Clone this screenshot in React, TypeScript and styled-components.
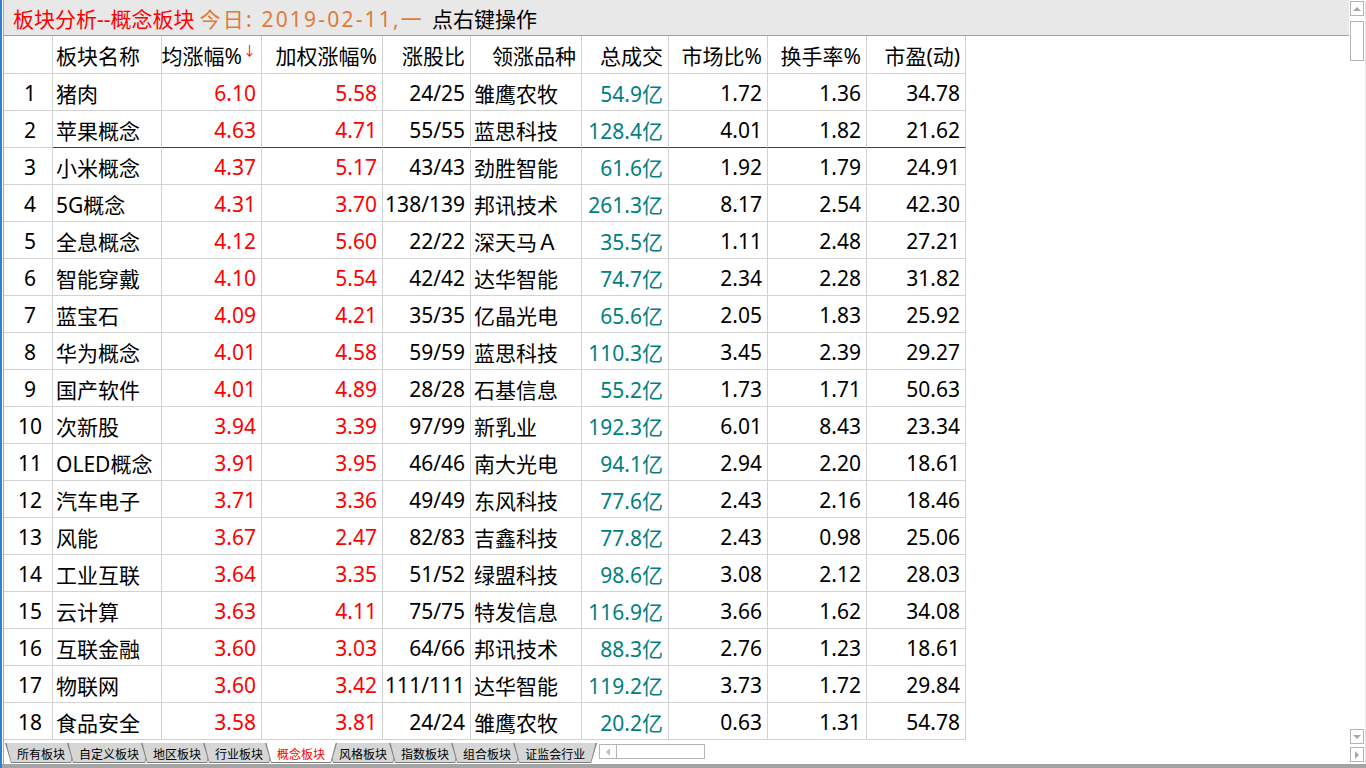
import React from 'react'
import styled, { createGlobalStyle, css } from 'styled-components'

const GlobalStyle = createGlobalStyle`
  html, body {
    margin: 0;
    padding: 0;
    background: #fff;
    overflow: hidden;
  }
  body {
    font-family: "Noto Sans", "Noto Sans CJK SC", sans-serif;
  }
`

type Tone = 'black' | 'red' | 'teal'
type Align = 'left' | 'right' | 'center'

const toneColor: Record<Tone, string> = {
  black: '#000000',
  red: '#ff0000',
  teal: '#008080',
}

const COLS = '49px 109px 100px 121px 88px 111px 87px 99px 99px 99px'

const Frame = styled.div`
  width: 1366px;
  height: 768px;
  box-sizing: border-box;
  display: flex;
  flex-direction: column;
  border-left: 2px solid #2f7fd6;
  background: #fff;
`

const Main = styled.div`
  flex: 1;
  display: flex;
  min-height: 0;
`

const Content = styled.div`
  flex: 1;
  min-width: 0;
  display: flex;
  flex-direction: column;
  margin-left: 1px;
  border-left: 1px solid #a8a8a8;
`

const TitleBar = styled.div`
  height: 35px;
  flex-shrink: 0;
  display: flex;
  align-items: center;
  padding-left: 9px;
  background: #e8e8e8;
  border-bottom: 1px solid #a0a0a0;
  font-size: 21px;
  white-space: nowrap;
`

const TitleText = styled.span<{ $color: string; $gap?: number; $spread?: number }>`
  color: ${(p) => p.$color};
  margin-left: ${(p) => p.$gap ?? 0}px;
  letter-spacing: ${(p) => p.$spread ?? 0}px;
`

const Table = styled.div`
  flex: 1;
  display: flex;
  flex-direction: column;
  min-height: 0;
`

const Row = styled.div`
  display: grid;
  grid-template-columns: ${COLS};
`

const Cell = styled.div<{ $align?: Align; $tone?: Tone; $head?: boolean; $mark?: boolean }>`
  height: ${(p) => (p.$head ? 38 : 37)}px;
  box-sizing: border-box;
  display: flex;
  align-items: center;
  justify-content: ${(p) =>
    p.$align === 'left' ? 'flex-start' : p.$align === 'center' ? 'center' : 'flex-end'};
  padding: ${(p) => (p.$head ? 0 : 2)}px ${(p) => (p.$align === 'left' ? 0 : p.$align === 'center' ? 0 : 5)}px 0
    ${(p) => (p.$align === 'left' ? 3 : p.$align === 'center' ? 4 : 0)}px;
  border-right: 1px solid #d2d2d2;
  border-bottom: 1px solid #d2d2d2;
  ${(p) =>
    p.$mark &&
    css`
      border-bottom-color: #2a2ae0;
    `}
  color: ${(p) => toneColor[p.$tone ?? 'black']};
  font-size: 21px;
  white-space: nowrap;
  overflow: visible;
`

const SortArrow = styled.span`
  color: #ff0000;
  font-size: 13px;
  margin-left: 1px;
  position: relative;
  top: -5px;
`

const TabBar = styled.div`
  height: 24px;
  flex-shrink: 0;
  display: flex;
  align-items: flex-start;
  padding: 3px 0 0 1px;
  box-sizing: border-box;
`

const Tab = styled.div<{ $active?: boolean }>`
  position: relative;
  height: 20px;
  padding: 0 12px;
  margin-left: -10px;
  display: flex;
  align-items: center;
  font-family: "Noto Sans CJK SC", sans-serif;
  font-size: 12px;
  color: ${(p) => (p.$active ? '#ff0000' : '#000')};
  z-index: ${(p) => (p.$active ? 2 : 'auto')};
  &:first-child {
    margin-left: 0;
  }
  &::before {
    content: '';
    position: absolute;
    inset: 0;
    background: #7c7c7c;
    clip-path: polygon(0 0, 100% 0, calc(100% - 6px) 100%, 6px 100%);
  }
  &::after {
    content: '';
    position: absolute;
    inset: 0 0 1px 0;
    background: ${(p) => (p.$active ? '#ffffff' : '#d6d6d6')};
    clip-path: polygon(1.4px 0, calc(100% - 1.4px) 0, calc(100% - 6.4px) 100%, 6.4px 100%);
  }
`

const TabLabel = styled.span`
  position: relative;
  z-index: 1;
`

const HScroll = styled.div`
  width: 106px;
  height: 15px;
  margin: 1px 0 0 2px;
  box-sizing: border-box;
  border: 1px solid #b4b4b4;
  display: flex;
`

const HArrow = styled.div`
  width: 16px;
  border-right: 1px solid #b4b4b4;
  display: flex;
  align-items: center;
  justify-content: center;
`

const Tri = styled.span<{ $dir: 'up' | 'down' | 'left' | 'right' }>`
  width: 0;
  height: 0;
  ${(p) =>
    p.$dir === 'up'
      ? css`
          border-left: 4px solid transparent;
          border-right: 4px solid transparent;
          border-bottom: 4px solid #a8a8a8;
        `
      : p.$dir === 'down'
      ? css`
          border-left: 4px solid transparent;
          border-right: 4px solid transparent;
          border-top: 4px solid #a8a8a8;
        `
      : p.$dir === 'left'
      ? css`
          border-top: 4px solid transparent;
          border-bottom: 4px solid transparent;
          border-right: 4px solid #c0c0c0;
        `
      : css`
          border-top: 4px solid transparent;
          border-bottom: 4px solid transparent;
          border-left: 4px solid #a8a8a8;
        `}
`

const BottomBar = styled.div`
  height: 4px;
  flex-shrink: 0;
  background: #a4a4a4;
`

const VScroll = styled.div`
  width: 17px;
  flex-shrink: 0;
  display: flex;
  flex-direction: column;
  align-items: flex-start;
  padding: 1px 0 2px 1px;
  box-sizing: border-box;
  border-right: 1px solid #e4e4e4;
`

const ScrollBox = styled.div<{ $h: number; $push?: boolean; $gap?: number }>`
  width: 14px;
  height: ${(p) => p.$h}px;
  box-sizing: border-box;
  border: 1px solid #b4b4b4;
  background: #fff;
  display: flex;
  align-items: center;
  justify-content: center;
  margin-top: ${(p) => (p.$push ? 'auto' : `${p.$gap ?? 0}px`)};
`

type Item = [string, string, string, string, string, string, string, string, string]

const rows: Item[] = [
  ['猪肉', '6.10', '5.58', '24/25', '雏鹰农牧', '54.9亿', '1.72', '1.36', '34.78'],
  ['苹果概念', '4.63', '4.71', '55/55', '蓝思科技', '128.4亿', '4.01', '1.82', '21.62'],
  ['小米概念', '4.37', '5.17', '43/43', '劲胜智能', '61.6亿', '1.92', '1.79', '24.91'],
  ['5G概念', '4.31', '3.70', '138/139', '邦讯技术', '261.3亿', '8.17', '2.54', '42.30'],
  ['全息概念', '4.12', '5.60', '22/22', '深天马Ａ', '35.5亿', '1.11', '2.48', '27.21'],
  ['智能穿戴', '4.10', '5.54', '42/42', '达华智能', '74.7亿', '2.34', '2.28', '31.82'],
  ['蓝宝石', '4.09', '4.21', '35/35', '亿晶光电', '65.6亿', '2.05', '1.83', '25.92'],
  ['华为概念', '4.01', '4.58', '59/59', '蓝思科技', '110.3亿', '3.45', '2.39', '29.27'],
  ['国产软件', '4.01', '4.89', '28/28', '石基信息', '55.2亿', '1.73', '1.71', '50.63'],
  ['次新股', '3.94', '3.39', '97/99', '新乳业', '192.3亿', '6.01', '8.43', '23.34'],
  ['OLED概念', '3.91', '3.95', '46/46', '南大光电', '94.1亿', '2.94', '2.20', '18.61'],
  ['汽车电子', '3.71', '3.36', '49/49', '东风科技', '77.6亿', '2.43', '2.16', '18.46'],
  ['风能', '3.67', '2.47', '82/83', '吉鑫科技', '77.8亿', '2.43', '0.98', '25.06'],
  ['工业互联', '3.64', '3.35', '51/52', '绿盟科技', '98.6亿', '3.08', '2.12', '28.03'],
  ['云计算', '3.63', '4.11', '75/75', '特发信息', '116.9亿', '3.66', '1.62', '34.08'],
  ['互联金融', '3.60', '3.03', '64/66', '邦讯技术', '88.3亿', '2.76', '1.23', '18.61'],
  ['物联网', '3.60', '3.42', '111/111', '达华智能', '119.2亿', '3.73', '1.72', '29.84'],
  ['食品安全', '3.58', '3.81', '24/24', '雏鹰农牧', '20.2亿', '0.63', '1.31', '54.78'],
]

const tabs = ['所有板块', '自定义板块', '地区板块', '行业板块', '概念板块', '风格板块', '指数板块', '组合板块', '证监会行业']

const SELECTED = 1

function App() {
  return (
    <>
      <GlobalStyle />
      <Frame>
        <Main>
          <Content>
            <TitleBar>
              <TitleText $color="#ff0000">板块分析--概念板块</TitleText>
              <TitleText $color="#e07a38" $gap={5} $spread={2.2}>今日: 2019-02-11,一</TitleText>
              <TitleText $color="#000" $gap={8}>点右键操作</TitleText>
            </TitleBar>
            <Table>
              <Row>
                <Cell $head $align="center"></Cell>
                <Cell $head $align="left">板块名称</Cell>
                <Cell $head>
                  均涨幅%<SortArrow>↓</SortArrow>
                </Cell>
                <Cell $head>加权涨幅%</Cell>
                <Cell $head>涨股比</Cell>
                <Cell $head>领涨品种</Cell>
                <Cell $head>总成交</Cell>
                <Cell $head>市场比%</Cell>
                <Cell $head>换手率%</Cell>
                <Cell $head>市盈(动)</Cell>
              </Row>
              {rows.map((r, i) => {
                const mark = i === SELECTED
                return (
                  <Row key={i}>
                    <Cell $align="center">{i + 1}</Cell>
                    <Cell $align="left" $mark={mark}>{r[0]}</Cell>
                    <Cell $tone="red" $mark={mark}>{r[1]}</Cell>
                    <Cell $tone="red" $mark={mark}>{r[2]}</Cell>
                    <Cell $mark={mark}>{r[3]}</Cell>
                    <Cell $align="left" $mark={mark}>{r[4]}</Cell>
                    <Cell $tone="teal" $mark={mark}>{r[5]}</Cell>
                    <Cell $mark={mark}>{r[6]}</Cell>
                    <Cell $mark={mark}>{r[7]}</Cell>
                    <Cell $mark={mark}>{r[8]}</Cell>
                  </Row>
                )
              })}
            </Table>
            <TabBar>
              {tabs.map((t) => (
                <Tab key={t} $active={t === '概念板块'}>
                  <TabLabel>{t}</TabLabel>
                </Tab>
              ))}
              <HScroll>
                <HArrow>
                  <Tri $dir="left" />
                </HArrow>
              </HScroll>
            </TabBar>
          </Content>
          <VScroll>
            <ScrollBox $h={15}>
              <Tri $dir="up" />
            </ScrollBox>
            <ScrollBox $h={40} $gap={5} />
            <ScrollBox $h={15} $push>
              <Tri $dir="down" />
            </ScrollBox>
            <ScrollBox $h={15} $gap={3}>
              <Tri $dir="right" />
            </ScrollBox>
          </VScroll>
        </Main>
        <BottomBar />
      </Frame>
    </>
  )
}

export default App
